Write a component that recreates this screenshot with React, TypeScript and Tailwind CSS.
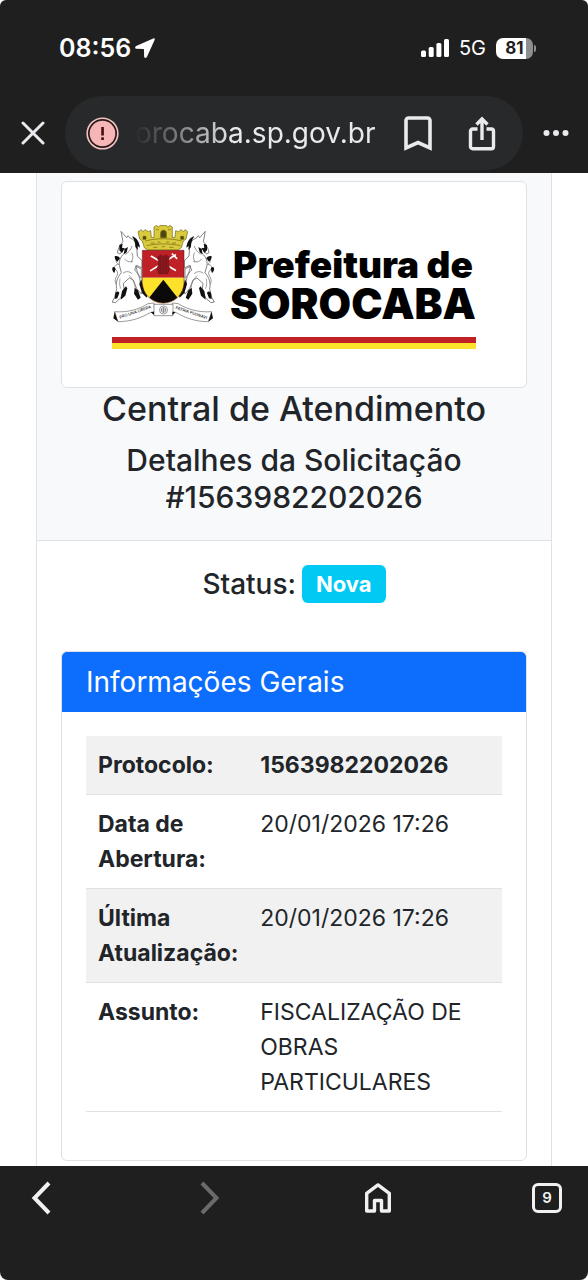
import type { ReactNode } from 'react';

type InfoRow = {
  label: string;
  value: string;
  strong?: boolean;
};

const rows: InfoRow[] = [
  { label: 'Protocolo:', value: '1563982202026', strong: true },
  { label: 'Data de Abertura:', value: '20/01/2026 17:26' },
  { label: 'Última Atualização:', value: '20/01/2026 17:26' },
  { label: 'Assunto:', value: 'FISCALIZAÇÃO DE OBRAS PARTICULARES' },
];

function StatusBar() {
  return (
    <div className="flex h-24 items-center justify-between pl-[59px] pr-[52px] text-white">
      <div className="flex items-center gap-1">
        <span className="text-[25px] leading-8 font-semibold">08:56</span>
        <svg width="20" height="20" viewBox="0 0 20 20" fill="currentColor" aria-hidden="true">
          <path d="M18.2.5 1.2 8c-1.700.800-1.300 2.800.4 2.800l6.800.1c.4 0 .6.2.6.6l.1 6.800c0 1.900 2.200 2.200 2.900.500L19.600 2c.5-1.100-.3-2-1.400-1.500z" />
        </svg>
      </div>
      <div className="flex items-center gap-2.5">
        <svg width="28" height="18" viewBox="0 0 28 18" fill="currentColor" aria-hidden="true">
          <rect x="0" y="11.500" width="5" height="6.500" rx="1.500" />
          <rect x="7.700" y="8" width="5" height="10" rx="1.500" />
          <rect x="15.400" y="4" width="5" height="14" rx="1.500" />
          <rect x="23" y="0" width="5" height="18" rx="1.500" />
        </svg>
        <span className="text-[20px] leading-6">5G</span>
        <div className="flex items-center gap-px">
          <div className="flex h-[21px] w-[37px] items-center justify-center rounded-[7px] bg-linear-to-r from-white from-81% to-[#8e8e8e] to-81%">
            <span className="text-[17px] leading-5 font-bold text-[#1f1f1f]">81</span>
          </div>
          <span className="h-[7px] w-[2px] rounded-r-full bg-[#8e8e8e]" />
        </div>
      </div>
    </div>
  );
}

function AddressBar() {
  return (
    <div className="flex items-center pb-[3px] text-[#e8eaed]">
      <button type="button" aria-label="Fechar" className="flex h-[74px] w-[65px] items-center justify-center">
        <svg width="24" height="24" viewBox="0 0 24 24" fill="none" stroke="currentColor" strokeWidth="3" strokeLinecap="round">
          <path d="M2 2 22 22M22 2 2 22" />
        </svg>
      </button>
      <div className="flex h-[74px] min-w-0 flex-1 items-center rounded-full bg-[#28292a] pr-[27px] pl-[21px]">
        <button type="button" aria-label="Site não seguro" className="shrink-0">
          <svg width="33" height="33" viewBox="0 0 33 33">
            <circle cx="16.500" cy="16.500" r="15.300" fill="#2a1a1a" stroke="#f3c3c3" strokeWidth="1.600" />
            <circle cx="16.500" cy="16.500" r="12.800" fill="#f6b6b8" />
            <rect x="15.200" y="10" width="2.700" height="8.500" fill="#4a1414" />
            <rect x="15.200" y="20.300" width="2.700" height="2.700" fill="#4a1414" />
          </svg>
        </button>
        <button
          type="button"
          className="ml-4 min-w-0 flex-1 overflow-hidden text-left text-[28px] leading-10 whitespace-nowrap mask-l-from-60% mask-l-to-100%"
        >
          orocaba.sp.gov.br
        </button>
        <button type="button" aria-label="Favoritar" className="ml-6 shrink-0">
          <svg width="28" height="35" viewBox="0 0 28 35" fill="none" stroke="currentColor" strokeWidth="3.600">
            <path d="M2 32V4.500A2.500 2.500 0 0 1 4.500 2h19A2.500 2.500 0 0 1 26 4.500V32l-12-5.500z" />
          </svg>
        </button>
        <button type="button" aria-label="Compartilhar" className="ml-9 shrink-0">
          <svg width="28" height="35" viewBox="0 0 28 35" fill="none" stroke="currentColor" strokeWidth="3.400">
            <path d="M9.500 13H4.700A2.200 2.200 0 0 0 2.500 15.200V30.500a2.200 2.200 0 0 0 2.200 2.200h18.600a2.200 2.200 0 0 0 2.200-2.200V15.200A2.200 2.200 0 0 0 23.300 13h-4.800M14 24V4M8.500 8.500 14 3l5.500 5.500" />
          </svg>
        </button>
      </div>
      <button type="button" aria-label="Mais opções" className="flex h-[74px] w-[65px] items-center justify-center">
        <svg width="26" height="8" viewBox="0 0 26 8" fill="currentColor">
          <circle cx="3.500" cy="4" r="3" />
          <circle cx="13" cy="4" r="3" />
          <circle cx="22.500" cy="4" r="3" />
        </svg>
      </button>
    </div>
  );
}

// One of the two supporters; the right one is the same drawing mirrored.
function Unicorn() {
  return (
    <g strokeLinejoin="round" strokeLinecap="round">
      {/* tail */}
      <path
        d="M60 214c-16-6-18-20-10-32 6-10 2-18-8-24 2-8 8-12 14-12-10-6-10-14-2-20 12 8 16 18 12 30 6 12 6 36-6 58z"
        fill="#fff"
        stroke="#666"
        strokeWidth="2"
      />
      <path d="M44 122c6-2 12 0 16 6l-8 10c-6-4-8-10-8-16zM37 156c4-4 8-2 10 4l-4 12c-5-4-7-10-6-16z" fill="#111" />
      {/* hind legs and body */}
      <path
        d="M64 48 80 66l4-6 6 7c10 3 18 12 20 24l2 30 14 14v22l-16-8-6 14c12 12 18 26 16 42l10 16-6 14-14-16-10-26-12-6-18 16 2 16-10 28-16 14-10-2 8-14 6-26c-4-18 2-34 14-48l-6-22c-2-16 6-30 18-38l2-12-10 4-8 12-8-4c2-12 8-24 16-32z"
        fill="#fff"
        stroke="#555"
        strokeWidth="2.200"
      />
      {/* mane and hatching */}
      <path d="M96 62c14 4 22 16 24 34l-7-5 1 12-8-9c0-12-3-22-10-32z" fill="#111" />
      <path d="M58 88l10-4-2 12 8 2-8 14-8-8zM74 100l10-6-4 16-9 6z" fill="#111" />
      <path d="M96 92c-4 12-12 20-20 24M74 130c6 8 14 10 24 8M96 112c4 8 4 18-2 26M70 172c8-6 18-6 26 2" fill="none" stroke="#666" strokeWidth="2" />
      <path d="M108 152l16 8v28c-8-8-14-20-16-36z" fill="#fff" stroke="#555" strokeWidth="2" />
      <path d="M124 190c2 16 10 32 20 44l-4 12-14-14-8-26zM66 226l12-14 4 6-6 22-14 12zM46 232c4-6 10-6 12 0l-6 16-8 2zM104 216l10 8 8 22-8 6-12-18z" fill="#111" />
      <path d="M88 180c10 8 16 22 18 36M60 190c-2 10-2 20 2 28" fill="none" stroke="#777" strokeWidth="2" />
    </g>
  );
}

function CoatOfArms() {
  return (
    <svg width="104" height="100" viewBox="36 28 312 300" className="shrink-0" role="img" aria-label="Brasão de Sorocaba">
      <Unicorn />
      <g transform="translate(379 0) scale(-1 1)">
        <Unicorn />
      </g>

      {/* Mural crown */}
      <g fill="#d9cb3c" stroke="#6d6414" strokeWidth="2" strokeLinejoin="round">
        <path d="M114 48l10-6 4 6 8-6 8 6 8-3 2 20 8 1V34l8-5 5 6 5-6h19l5 6 5-6 8 5v32l8-1 2-20 8 3 8-6 8 6 4-6 8 6-5 22-8 6-6 20-10 7H143l-10-7-6-20-8-6z" />
        <path d="M136 76c34-9 75-9 109 0M140 90c30-7 71-7 101 0" fill="none" />
        <path d="M182 66V52a8.500 8.500 0 0 1 17 0v14zM129 62h9v9h-9zM242 62h9v9h-9z" fill="#4d4610" />
        <path d="M152 82h12M172 79h10M198 79h10M216 82h12M160 95h12M185 93h10M208 95h12M168 42h8M204 42h8" fill="none" />
      </g>

      {/* Shield */}
      <path d="M127 104h125v82H127z" fill="#bf2127" />
      <path d="M127 186h125v14a62.500 62.500 0 0 1-125 0z" fill="#fde22b" />
      <path d="M190 192 148 245.500a62.500 62.500 0 0 0 84 0z" fill="#0a0a0a" />
      <path d="M127 104h125v96a62.500 62.500 0 0 1-125 0z" fill="none" stroke="#5b1010" strokeWidth="1.500" />
      <g stroke="#fff" strokeWidth="5" strokeLinecap="round">
        <path d="M154 122l72 42M226 118l-74 47" />
        <path d="M217 115l13 13" />
      </g>
      <path d="M172 124l10-6 8 4 10-4 8 7-3 16 4 18-6 15h-27l-4-15 4-19z" fill="#8a181d" stroke="#5c1014" strokeWidth="1.500" />
      <path d="M181 122v50M189 124v48M198 122v50" stroke="#5c1014" strokeWidth="2" strokeDasharray="3 3" />

      {/* Ribbon with the motto */}
      <g fill="#fff" stroke="#666" strokeWidth="2" strokeLinejoin="round">
        <path d="M44 288c36 3 72-6 100-24l18-2 2 26-12 2c-30 18-62 28-98 28z" />
        <path d="M335 288c-36 3-72-6-100-24l-18-2-2 26 12 2c30 18 62 28 98 28z" />
        <path d="M162 266h57v34h-57z" />
        <circle cx="190.500" cy="283" r="12" />
        <circle cx="190.500" cy="283" r="7" />
        <path d="M183 283h15M190.500 275v16" />
      </g>
      <path d="M44 288l10 30-14-10zM335 288l-10 30 14-10zM152 290l10 8v-10zM227 290l-10 8v-10z" fill="#111" />
      <g fontFamily="Inter, sans-serif" fontSize="12" fontWeight="500" fill="#222">
        <text transform="translate(60 309) rotate(-19)">PRO UNA LIBERA</text>
        <text transform="translate(226 279) rotate(19)">PATRIA PUGNAVI</text>
      </g>
    </svg>
  );
}

function CityLogo() {
  return (
    <div className="flex h-[207px] flex-col items-center justify-center rounded-md border border-[#dee2e6] bg-white pt-1">
      <div className="flex flex-col">
        <div className="flex items-end gap-[14px]">
          <CoatOfArms />
          <div className="whitespace-nowrap text-black">
            <p className="text-[37px] leading-9 font-black">Prefeitura de</p>
            <p className="text-[42px] leading-[42px] font-black">SOROCABA</p>
          </div>
        </div>
        <div className="mt-3 h-[6px] bg-[#bf2127]" />
        <div className="h-[6px] bg-[#fde22b]" />
      </div>
    </div>
  );
}

function InfoTable() {
  return (
    <table className="w-full table-fixed border-separate border-spacing-0 text-left text-[23px] leading-[35px]">
      <tbody>
        {rows.map((row) => (
          <tr key={row.label} className="align-top odd:bg-[#f1f1f1]">
            <th scope="row" className="w-[39%] border-b border-[#dee2e6] px-3 pt-3 pb-[11px] font-bold">
              {row.label}
            </th>
            <td className={`border-b border-[#dee2e6] px-3 pt-3 pb-[11px] ${row.strong ? 'font-bold' : ''}`}>
              {row.value}
            </td>
          </tr>
        ))}
      </tbody>
    </table>
  );
}

function NavButton({ label, disabled, children }: { label: string; disabled?: boolean; children: ReactNode }) {
  return (
    <button
      type="button"
      aria-label={label}
      disabled={disabled}
      className="flex h-16 w-[60px] items-center justify-center text-[#f1f1f1] disabled:text-[#6a6a6c]"
    >
      {children}
    </button>
  );
}

function BottomBar() {
  return (
    <nav className="flex justify-between rounded-b-lg bg-[#1f1f1f] px-[11px] pb-[50px]">
      <NavButton label="Voltar">
        <svg width="20" height="34" viewBox="0 0 20 34" fill="none" stroke="currentColor" strokeWidth="4">
          <path d="M18 2 3.500 17 18 32" />
        </svg>
      </NavButton>
      <NavButton label="Avançar" disabled>
        <svg width="20" height="34" viewBox="0 0 20 34" fill="none" stroke="currentColor" strokeWidth="4">
          <path d="M2 2 16.500 17 2 32" />
        </svg>
      </NavButton>
      <NavButton label="Início">
        <svg width="28" height="30" viewBox="0 0 28 30" fill="none" stroke="currentColor" strokeWidth="3.400" strokeLinejoin="round">
          <path d="M2.700 10.300 14 1.900l11.300 8.400V28h-7.800V17.500h-7V28H2.700z" />
        </svg>
      </NavButton>
      <NavButton label="Abas abertas">
        <span className="flex size-[30px] items-center justify-center rounded-md border-3 border-current text-[15px] leading-5 font-semibold">
          9
        </span>
      </NavButton>
    </nav>
  );
}

export default function App() {
  return (
    <div className="flex min-h-screen flex-col bg-white font-['Inter',sans-serif] text-[#212529]">
      <header className="rounded-t-md bg-[#1f1f1f]">
        <StatusBar />
        <AddressBar />
      </header>

      <main className="flex flex-1 flex-col px-9">
        <div className="flex-1 border-x border-[#dee2e6]">
          <section className="border-b border-[#dee2e6] bg-[#f8f9fa] px-6 pt-2 pb-6 text-center">
            <CityLogo />
            <h1 className="mb-3 text-[34px] leading-[42px] font-medium">Central de Atendimento</h1>
            <h2 className="text-[30px] leading-[37px] font-medium">
              Detalhes da Solicitação #1563982202026
            </h2>
          </section>

          <section className="px-6 pt-6 pb-1">
            <div className="mb-12 flex items-center justify-center gap-1.5">
              <h3 className="text-[28px] leading-9 font-medium">Status:</h3>
              <span className="rounded-md bg-[#00caf3] px-3.5 py-1.5 text-[22px] leading-[26px] font-bold text-white">
                Nova
              </span>
            </div>

            <div className="overflow-hidden rounded-md border border-[#dee2e6]">
              <h3 className="bg-[#0d6efd] px-6 py-3 text-[28px] leading-9 text-white">Informações Gerais</h3>
              <div className="px-6 pt-6 pb-12">
                <InfoTable />
              </div>
            </div>
          </section>
        </div>
      </main>

      <BottomBar />
    </div>
  );
}
